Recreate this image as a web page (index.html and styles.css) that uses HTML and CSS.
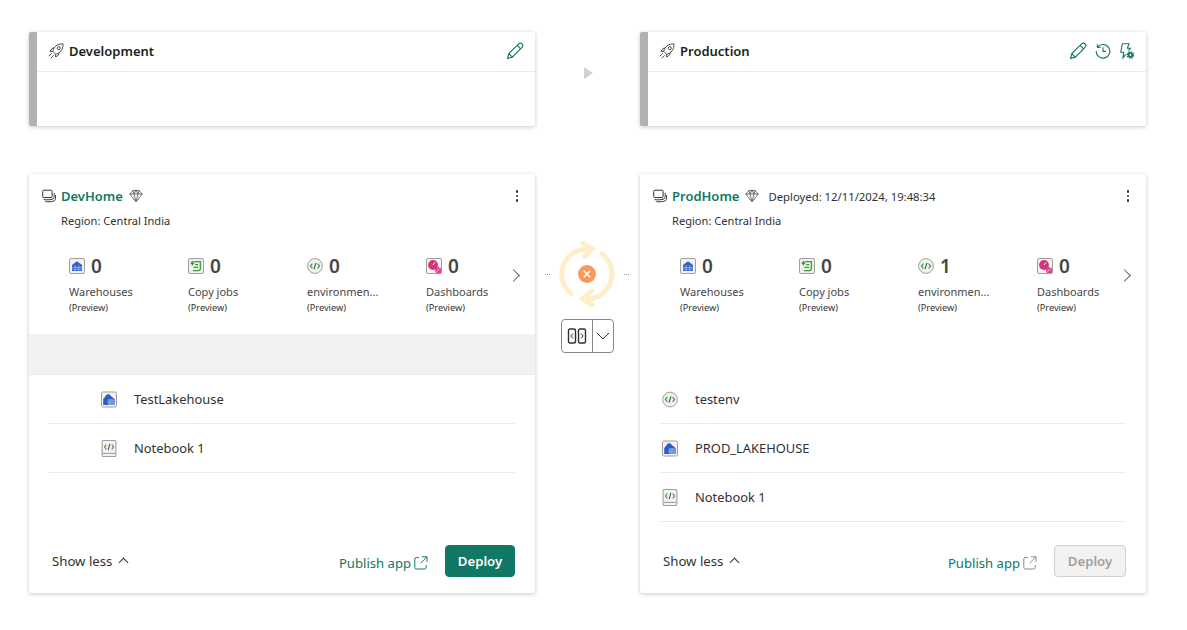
FILE: index.html
```html
<!DOCTYPE html>
<html lang="en">
<head>
    <meta charset="UTF-8">
    <title>Deployment pipeline</title>
    <link rel="stylesheet" href="styles.css">
</head>
<body>
    <svg class="defs" width="0" height="0">
        <symbol id="rocket" viewBox="0 0 16 16"><g fill="none" stroke="#323130" stroke-width=".85"><path d="M4.8 8.4 C5.4 3.8 9.4 .8 15 .8 C15.2 6.4 12.2 10.4 7.6 11.2 Z"/><circle cx="10.8" cy="5.2" r="1.5"/><path d="M4.8 8.4 L2 8.4 L4 5.4 L6.4 5 M7.6 11.2 L7.6 14 L10.6 12 L11 9.6 M3.6 10.4 L.8 13.2 M5.6 12.4 L2.8 15.2"/></g></symbol>
        <symbol id="pencil" viewBox="0 0 18 18"><path d="M1.6 16.4 L2.8 11.6 L12.6 1.9 C13.6 .9 15.2 .9 16.1 1.9 C17 2.8 17 4.4 16 5.4 L6.3 15.2 Z M11.2 3.3 L14.6 6.8 M2.8 11.6 L6.3 15.2" fill="none" stroke="#117865" stroke-width="1.1"/></symbol>
        <symbol id="history" viewBox="0 0 16 16"><path d="M2.6 4.2 A6.8 6.8 0 1 1 1.2 8 M2.3 1.2 L2.5 4.4 L5.7 4.2 M8 4.2 L8 8.4 L11 8.4" fill="none" stroke="#117865" stroke-width="1.1"/></symbol>
        <symbol id="bolt" viewBox="0 0 16 16"><path d="M3.4 .7 L10 .7 L8.4 5.2 L11.4 5.2 L9.6 7.6 M3.4 .7 L1.8 9.2 L4.6 9.2 L4 15 L6.6 11.4" fill="none" stroke="#117865" stroke-width="1.1"/><circle cx="11.4" cy="12" r="3.1" fill="none" stroke="#117865" stroke-width="1.4" stroke-dasharray="1.5 .9"/><circle cx="11.4" cy="12" r="2.7" fill="#117865"/><circle cx="11.4" cy="12" r=".9" fill="#fff"/></symbol>
        <symbol id="stack" viewBox="0 0 14 14"><g fill="none" stroke="#323130" stroke-width="1"><rect x=".7" y="1.2" width="9.4" height="7.4" rx="1.2"/><path d="M1.6 10.6 C4 11 8.6 11 11.2 9.8 C12 9.2 12.2 8 12.2 4 M3.4 12.6 C6 13 10.4 13 12.6 11.6 C13.6 10.8 13.6 9 13.6 6"/></g></symbol>
        <symbol id="gem" viewBox="0 0 14 14"><g fill="none" stroke="#605e5c" stroke-width=".9"><path d="M4 1.4 L10 1.4 L13.2 5 L7 12.8 L.8 5 Z M.8 5 L13.2 5 M4 1.4 L5 5 L7 12.8 L9 5 L10 1.4 M5 5 L7 1.4 L9 5"/></g></symbol>
        <symbol id="warehouse" viewBox="0 0 16 16"><rect x=".5" y=".5" width="15" height="15" rx="1.5" fill="#f3f2f1" stroke="#a19f9d"/><path d="M3 13 L3 7 L8 3.2 L13 7 L13 13 Z" fill="#2f5fc4"/><path d="M3 9.4 H13 M3 11.2 H13 M6.2 7 V13 M9.8 7 V13" stroke="#dce6f7" stroke-width=".5"/></symbol>
        <symbol id="copyjob" viewBox="0 0 16 16"><rect x=".5" y=".5" width="15" height="15" rx="1.5" fill="#eef2ea" stroke="#a19f9d"/><path d="M6 3.6 H12.4 V10 C12.4 11.6 11.6 12.6 10.4 12.6 H5 M2.8 6 L4.4 3.6 L6 6 M4.4 4 V7.4 M7 6.6 H10.2 M5.6 9.4 H10.2" fill="none" stroke="#3f9a3d" stroke-width="1.3"/></symbol>
        <symbol id="envicon" viewBox="0 0 16 16"><circle cx="8" cy="8" r="7.4" fill="#f1f1f0" stroke="#a19f9d"/><path d="M5.4 5.6 L3.4 8 L5.4 10.4 M10.6 5.6 L12.6 8 L10.6 10.4" fill="none" stroke="#3f9a3d" stroke-width="1.2"/><path d="M9 4.8 L7 11.2" stroke="#1f6d2a" stroke-width="1.1"/></symbol>
        <symbol id="dash" viewBox="0 0 16 16"><rect x=".5" y=".5" width="15" height="15" rx="1.5" fill="#f3f2f1" stroke="#a19f9d"/><circle cx="7" cy="7" r="4.9" fill="#d6337f"/><path d="M7 7 L9 4.4" stroke="#fff" stroke-width="1"/><path d="M10 15 L15 15 L15 10 L13.6 10 L12.2 8.6 L8.8 12 Z" fill="#e8408c"/><path d="M10.6 13.6 L13.6 10.6" stroke="#fff" stroke-width=".7"/></symbol>
        <symbol id="lake" viewBox="0 0 16 16"><rect x=".5" y=".5" width="15" height="15" rx="1.5" fill="#f3f2f1" stroke="#a19f9d"/><path d="M2.2 13.6 L2.2 7.4 C3.4 6.4 4 5.4 4.8 4.2 C6 2.4 8.4 2.4 9.6 4.2 L13.8 7.8 L13.8 13.6 Z" fill="#2b5fc7"/><path d="M7 8.6 C8 7.8 9 9.4 10 8.6 C11 7.8 12 9.4 13.4 8.6 M6.4 10.6 C7.6 9.8 8.6 11.4 10 10.6 C11 9.8 12 11.4 13.4 10.6 M7 12.6 C8 11.8 9 13.2 10 12.6 C11 11.8 12 13.2 13.4 12.6" fill="none" stroke="#e6edfa" stroke-width=".9"/></symbol>
        <symbol id="notebook" viewBox="0 0 14 16"><rect x=".5" y=".5" width="13" height="15" rx="1" fill="#f3f2f1" stroke="#a19f9d"/><path d="M.8 12.6 H13.2" stroke="#a19f9d"/><path d="M4.4 4.4 L2.8 6.6 L4.4 8.8 M9.6 4.4 L11.2 6.6 L9.6 8.8" fill="none" stroke="#3f9a3d" stroke-width="1.1"/><path d="M7.8 3.6 L6.2 9.6" stroke="#1f6d2a"/></symbol>
        <symbol id="external" viewBox="0 0 14 14"><path d="M5 1.6 H2.2 C1.3 1.6 .8 2.1 .8 3 V11.6 C.8 12.5 1.3 13 2.2 13 H10.8 C11.7 13 12.2 12.5 12.2 11.6 V9 M8 .8 H13 V5.8 M13 .8 L6.6 7.2" fill="none" stroke="currentColor" stroke-width="1"/></symbol>
    </svg>

    <main class="pipeline">
        <section class="stage">
            <div class="stage-head">
                <svg class="icon-16"><use href="#rocket"/></svg>
                <h2>Development</h2>
                <div class="stage-actions"><svg class="icon-18"><use href="#pencil"/></svg></div>
            </div>
        </section>

        <div class="stage-arrow"></div>

        <section class="stage">
            <div class="stage-head">
                <svg class="icon-16"><use href="#rocket"/></svg>
                <h2>Production</h2>
                <div class="stage-actions">
                    <svg class="icon-18"><use href="#pencil"/></svg>
                    <svg class="icon-16"><use href="#history"/></svg>
                    <svg class="icon-16"><use href="#bolt"/></svg>
                </div>
            </div>
        </section>

        <section class="workspace">
            <div class="ws-title">
                <svg class="icon-14"><use href="#stack"/></svg>
                <a class="ws-name">DevHome</a>
                <svg class="icon-14"><use href="#gem"/></svg>
                <span class="ws-more"><i></i><i></i><i></i></span>
            </div>
            <p class="ws-region">Region: Central India</p>
            <div class="stats">
                <div class="stat">
                    <div class="stat-top"><svg class="icon-16"><use href="#warehouse"/></svg><b>0</b></div>
                    <div class="stat-label">Warehouses</div><div class="stat-note">(Preview)</div>
                </div>
                <div class="stat">
                    <div class="stat-top"><svg class="icon-16"><use href="#copyjob"/></svg><b>0</b></div>
                    <div class="stat-label">Copy jobs</div><div class="stat-note">(Preview)</div>
                </div>
                <div class="stat">
                    <div class="stat-top"><svg class="icon-16"><use href="#envicon"/></svg><b>0</b></div>
                    <div class="stat-label">environmen...</div><div class="stat-note">(Preview)</div>
                </div>
                <div class="stat">
                    <div class="stat-top"><svg class="icon-16"><use href="#dash"/></svg><b>0</b></div>
                    <div class="stat-label">Dashboards</div><div class="stat-note">(Preview)</div>
                </div>
                <span class="stats-next"></span>
            </div>
            <div class="band band-grey"></div>
            <ul class="items items-indent">
                <li><svg class="icon-item"><use href="#lake"/></svg>TestLakehouse</li>
                <li><svg class="icon-item"><use href="#notebook"/></svg>Notebook 1</li>
            </ul>
            <div class="ws-foot">
                <a class="show-less">Show less <span class="chev-up"></span></a>
                <a class="publish">Publish app <svg class="icon-14"><use href="#external"/></svg></a>
                <button class="deploy">Deploy</button>
            </div>
        </section>

        <div class="sync">
            <div class="sync-ring">
                <span class="dash-l"></span>
                <svg class="sync-arrows" width="56" height="66" viewBox="0 0 56 66">
                    <g fill="none" stroke="#ffefc9" stroke-width="5" stroke-linecap="round">
                        <path d="M12 52.4 A25 25 0 0 1 31 8.2"/>
                        <path d="M43 13 A25 25 0 0 1 23 57.5"/>
                        <path d="M24 2 L33 8 L26 15"/>
                        <path d="M33 50 L23.5 57.5 L33 64"/>
                    </g>
                    <circle cx="28" cy="33" r="9" fill="#f8995a"/>
                    <path d="M24.8 29.8 L31.2 36.2 M31.2 29.8 L24.8 36.2" stroke="#fff" stroke-width="1.6"/>
                </svg>
                <span class="dash-r"></span>
            </div>
            <div class="compare">
                <span class="compare-main">
                    <svg width="20" height="16" viewBox="0 0 20 16"><g fill="none" stroke="#323130"><rect x="1.5" y="1" width="7" height="14" rx="1.5" stroke-width="1.4"/><rect x="11.5" y="1" width="7" height="14" rx="1.5" stroke-width="1.4"/><path d="M6 5.6 L3.8 8 L6 10.4 M14 5.6 L16.2 8 L14 10.4" stroke-width="1"/></g></svg>
                </span>
                <span class="compare-drop">
                    <svg width="14" height="8" viewBox="0 0 14 8"><path d="M1 1 L7 7 L13 1" fill="none" stroke="#323130"/></svg>
                </span>
            </div>
        </div>

        <section class="workspace">
            <div class="ws-title">
                <svg class="icon-14"><use href="#stack"/></svg>
                <a class="ws-name">ProdHome</a>
                <svg class="icon-14"><use href="#gem"/></svg>
                <span class="ws-deployed">Deployed: 12/11/2024, 19:48:34</span>
                <span class="ws-more"><i></i><i></i><i></i></span>
            </div>
            <p class="ws-region">Region: Central India</p>
            <div class="stats">
                <div class="stat">
                    <div class="stat-top"><svg class="icon-16"><use href="#warehouse"/></svg><b>0</b></div>
                    <div class="stat-label">Warehouses</div><div class="stat-note">(Preview)</div>
                </div>
                <div class="stat">
                    <div class="stat-top"><svg class="icon-16"><use href="#copyjob"/></svg><b>0</b></div>
                    <div class="stat-label">Copy jobs</div><div class="stat-note">(Preview)</div>
                </div>
                <div class="stat">
                    <div class="stat-top"><svg class="icon-16"><use href="#envicon"/></svg><b>1</b></div>
                    <div class="stat-label">environmen...</div><div class="stat-note">(Preview)</div>
                </div>
                <div class="stat">
                    <div class="stat-top"><svg class="icon-16"><use href="#dash"/></svg><b>0</b></div>
                    <div class="stat-label">Dashboards</div><div class="stat-note">(Preview)</div>
                </div>
                <span class="stats-next"></span>
            </div>
            <div class="band"></div>
            <ul class="items">
                <li><svg class="icon-item"><use href="#envicon"/></svg>testenv</li>
                <li><svg class="icon-item"><use href="#lake"/></svg>PROD_LAKEHOUSE</li>
                <li><svg class="icon-item"><use href="#notebook"/></svg>Notebook 1</li>
            </ul>
            <div class="ws-foot">
                <a class="show-less">Show less <span class="chev-up"></span></a>
                <a class="publish">Publish app <svg class="icon-14 muted"><use href="#external"/></svg></a>
                <button class="deploy" disabled>Deploy</button>
            </div>
        </section>
    </main>
</body>
</html>
```

FILE: styles.css
```css
* {
    box-sizing: border-box;
}

body {
    margin: 0;
    background: #fff;
    font-family: "Noto Sans", "Open Sans", Arial, sans-serif;
    color: #323130;
}

.defs {
    display: block;
    height: 0;
}

.pipeline {
    display: grid;
    grid-template-columns: 506px 105px 506px;
    grid-template-rows: 94px 419px;
    row-gap: 48px;
    padding: 32px 0 37px 29px;
}

.icon-14 {
    width: 14px;
    height: 14px;
    flex: none;
}

.icon-16 {
    width: 16px;
    height: 16px;
    flex: none;
}

.icon-18 {
    width: 18px;
    height: 18px;
    flex: none;
}

.icon-item {
    width: 16px;
    height: 17px;
    flex: none;
}

/* stage cards */
.stage {
    background: #fff;
    border-left: 8px solid #b3b0ad;
    border-radius: 2px;
    box-shadow: 0 1px 4px rgba(0, 0, 0, .22);
}

.stage-head {
    display: flex;
    align-items: center;
    gap: 5px;
    height: 40px;
    padding: 0 11px 1px 11px;
    border-bottom: 1px solid #edebe9;
}

.stage-head h2 {
    margin: 0;
    font-size: 13px;
    font-weight: 600;
    color: #201f1e;
}

.stage-actions {
    display: flex;
    align-items: center;
    gap: 8px;
    margin-left: auto;
}

.stage-arrow {
    justify-self: center;
    width: 0;
    height: 0;
    margin: 35px 0 0 2px;
    border-left: 9px solid #d2d0ce;
    border-top: 6.5px solid transparent;
    border-bottom: 6.5px solid transparent;
}

/* workspace cards */
.workspace {
    display: flex;
    flex-direction: column;
    background: #fff;
    border-radius: 2px;
    box-shadow: 0 1px 4px rgba(0, 0, 0, .22);
}

.ws-title {
    display: flex;
    align-items: center;
    gap: 5px;
    height: 18px;
    margin: 13px 12px 0 13px;
}

.ws-name {
    margin-right: 1px;
    font-size: 13px;
    font-weight: 600;
    color: #117865;
}

.ws-deployed {
    margin-left: 4px;
    font-size: 11.3px;
    color: #323130;
}

.ws-more {
    display: flex;
    flex-direction: column;
    gap: 2px;
    margin-left: auto;
    margin-right: 5px;
}

.ws-more i {
    width: 2.5px;
    height: 2.5px;
    border-radius: 50%;
    background: #323130;
}

.ws-region {
    margin: 7px 0 0 32px;
    font-size: 11.1px;
    line-height: 18px;
}

.stats {
    position: relative;
    display: flex;
    height: 75px;
    margin: 24px 0 0 40px;
}

.stat {
    flex: none;
    width: 119px;
}

.stat-top {
    display: flex;
    align-items: center;
    gap: 6px;
    height: 24px;
}

.stat-top b {
    font-size: 19px;
    font-weight: 600;
    color: #484644;
}

.stat-label {
    margin-top: 6px;
    font-size: 11px;
    line-height: 16px;
    color: #484644;
}

.stat-note {
    margin-top: 1px;
    font-size: 9.2px;
    line-height: 14px;
}

.stats-next {
    position: absolute;
    left: 440px;
    top: 17px;
    width: 9px;
    height: 9px;
    border-top: 1.2px solid #605e5c;
    border-right: 1.2px solid #605e5c;
    transform: rotate(45deg);
}

.band {
    height: 41px;
    margin-top: 5px;
}

.band-grey {
    background: #f3f2f1;
    border-bottom: 1px solid #edebe9;
}

.items {
    margin: 0 20px;
    padding: 0;
    list-style: none;
}

.items li {
    display: flex;
    align-items: center;
    gap: 17px;
    height: 49px;
    padding-left: 2px;
    border-bottom: 1px solid #edebe9;
    font-size: 12.9px;
    color: #323130;
}

.items-indent li {
    padding-left: 52px;
}

.ws-foot {
    display: flex;
    align-items: center;
    height: 32px;
    margin: auto 20px 16px 23px;
}

.show-less {
    display: flex;
    align-items: center;
    gap: 8px;
    margin-top: -1px;
    font-size: 13.2px;
}

.chev-up {
    width: 7px;
    height: 7px;
    margin-top: 4px;
    border-top: 1px solid #323130;
    border-left: 1px solid #323130;
    transform: rotate(45deg);
}

.publish {
    display: flex;
    align-items: center;
    gap: 3px;
    margin-left: auto;
    margin-top: 4px;
    font-size: 13.1px;
    color: #117865;
}

.muted {
    color: #8a8886;
}

.deploy {
    width: 70px;
    height: 32px;
    margin-left: 17px;
    border: 1px solid #117865;
    border-radius: 4px;
    background: #117865;
    color: #fff;
    font: 600 13.2px "Noto Sans", "Open Sans", Arial, sans-serif;
}

.deploy:disabled {
    width: 72px;
    background: #f3f2f1;
    border-color: #d2d0ce;
    color: #a19f9d;
}

/* middle column */
.sync {
    display: flex;
    flex-direction: column;
    align-items: center;
    padding-top: 67px;
}

.sync-ring {
    display: flex;
    align-items: center;
    margin-right: 1px;
}

.dash-l,
.dash-r {
    width: 5px;
    border-top: 1px dotted #a19f9d;
}

.dash-l {
    margin-right: 9px;
}

.dash-r {
    margin-left: 9px;
}

.compare {
    display: flex;
    width: 53px;
    height: 34px;
    margin-top: 12px;
    border: 1px solid #8a8886;
    border-radius: 4px;
}

.compare-main {
    display: flex;
    align-items: center;
    justify-content: center;
    width: 31px;
    border-right: 1px solid #8a8886;
}

.compare-drop {
    display: flex;
    align-items: center;
    justify-content: center;
    flex: 1;
}
```
